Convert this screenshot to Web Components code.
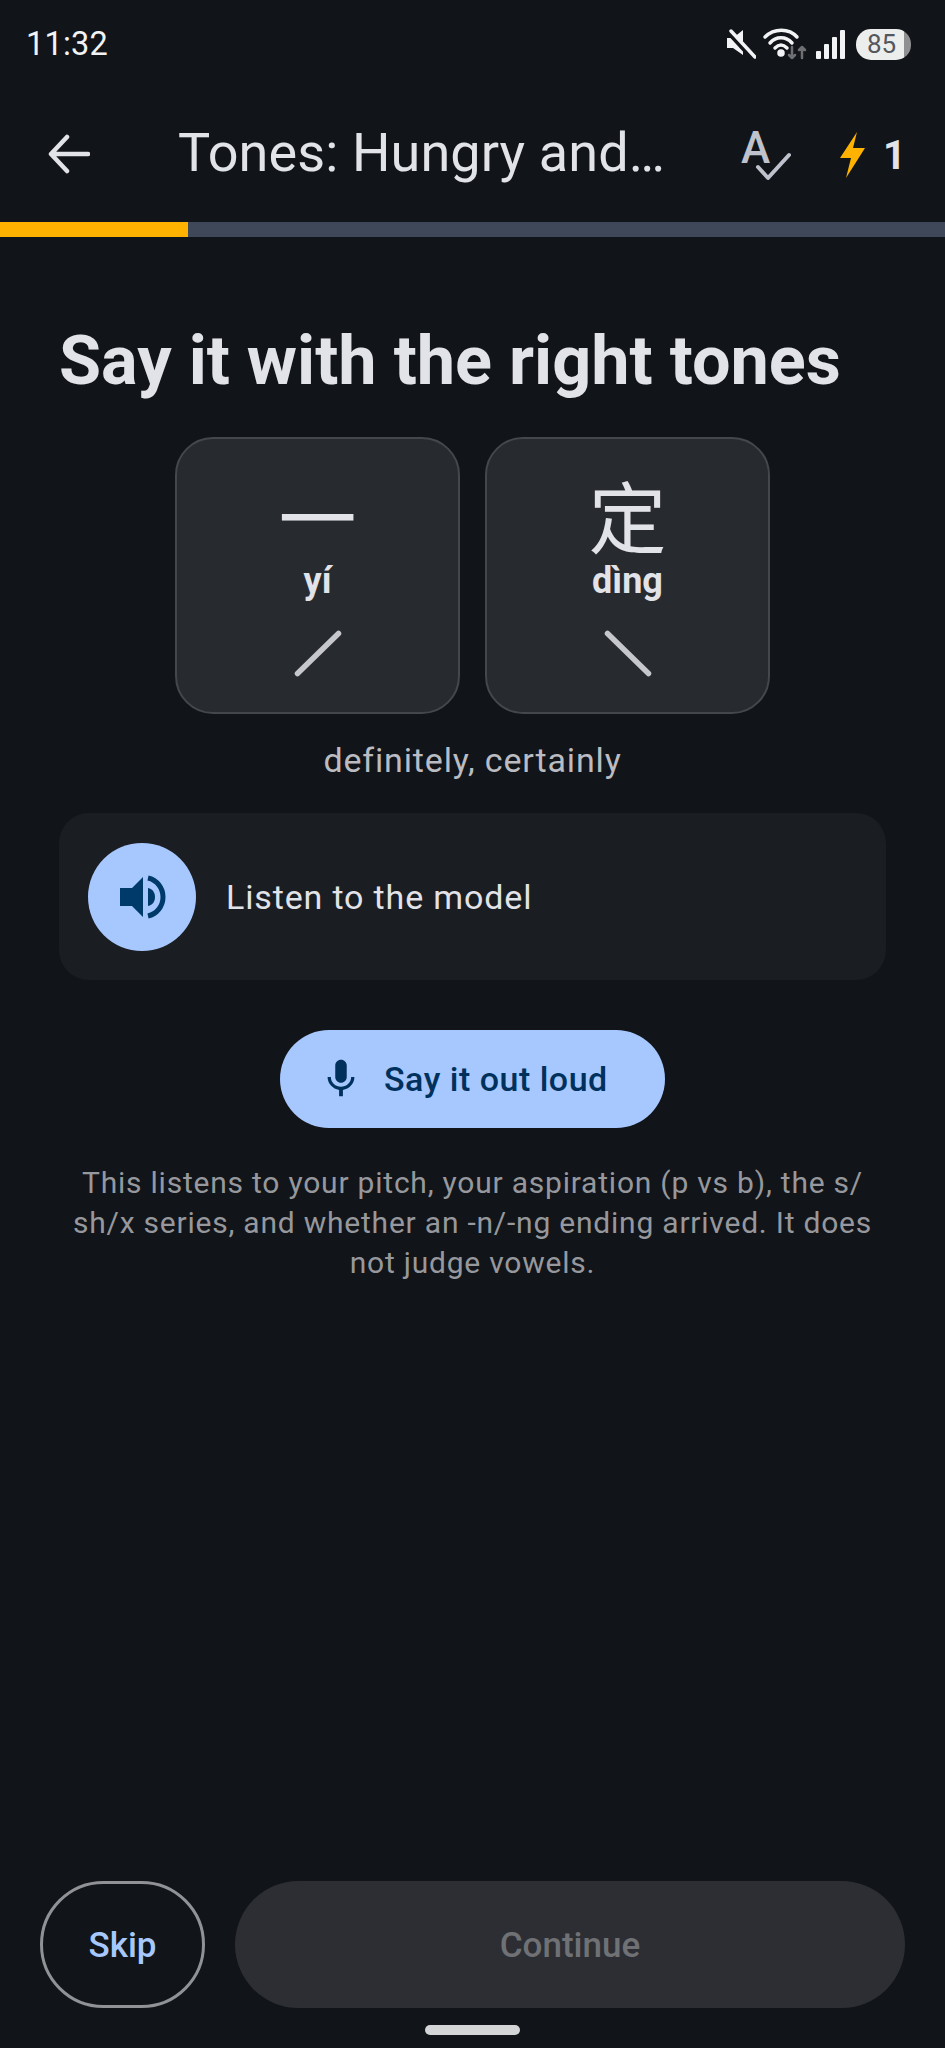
<!DOCTYPE html>
<html lang="en"><head><meta charset="utf-8"><title>Tones</title>
<style>
html,body{margin:0;padding:0;background:#111418}
body{width:945px;height:2048px;overflow:hidden;font-family:Roboto,"Noto Sans CJK SC",sans-serif;color:#e2e3e8}
x-app{height:2048px}
</style></head><body>
<x-app>
 <x-status></x-status>
 <x-appbar title="Tones: Hungry and…"></x-appbar>
 <x-progress></x-progress>
 <x-lesson>
  <x-heading>Say it with the right tones</x-heading>
  <x-cards>
   <x-tone hanzi="一" pinyin="yí" tone="rise"></x-tone>
   <x-tone hanzi="定" pinyin="dìng" tone="fall"></x-tone>
  </x-cards>
  <x-meaning>definitely, certainly</x-meaning>
  <x-listen>Listen to the model</x-listen>
  <x-say>Say it out loud</x-say>
  <x-note>This listens to your pitch, your aspiration (p vs b), the s/<br>sh/x series, and whether an -n/-ng ending arrived. It does<br>not judge vowels.</x-note>
 </x-lesson>
 <x-footer></x-footer>
</x-app>
<script>
function def(name,html,init){
  customElements.define(name,class extends HTMLElement{
    constructor(){super();this.attachShadow({mode:'open'});}
    connectedCallback(){this.shadowRoot.innerHTML=typeof html==='function'?html(this):html;}
  });
}
def('x-app',`<style>:host{display:flex;flex-direction:column;width:945px}</style><slot></slot>`);
def('x-status',`<style>
:host{display:flex;align-items:center;height:88px;padding:0 34px 0 26px;box-sizing:border-box;justify-content:space-between;color:#f2f3f5}
.t{font-size:32.500px;letter-spacing:.2px}
.r{display:flex;align-items:center}
svg{display:block}
.b{width:55px;height:31px;border-radius:15px;background:linear-gradient(90deg,#eceded 0 87%,#8f9092 87%);color:#55575b;font-size:26px;display:flex;align-items:center;justify-content:center;padding-right:4px;box-sizing:border-box;margin-left:10px}
</style><span class="t">11:32</span><div class="r">
<svg width="30" height="30" viewBox="0 0 30 30" fill="#f2f3f5"><path d="M1 9h6l10-8v25L7 19H1z"/><path d="M3 3l23 25" stroke="#111418" stroke-width="6"/><path d="M5 2l24 26" stroke="#f2f3f5" stroke-width="3.500" stroke-linecap="round"/></svg>
<svg width="46" height="34" viewBox="0 0 46 34" style="margin-left:6px" fill="none" stroke="#f2f3f5" stroke-width="3.500" stroke-linecap="round"><path d="M3 10C12 1 27 1 35 10"/><path d="M8 16C14 9 24 9 30 16"/><path d="M13 21C17 17 21 17 25 21"/><circle cx="19" cy="26" r="2" fill="#f2f3f5"/><path d="M30 20v11M30 31l-3-3M40 31V20M40 20l-3 3M40 20l3 3M30 31l3-3" stroke="#6d6f73" stroke-width="2.500"/></svg>
<svg width="30" height="30" viewBox="0 0 30 30" style="margin-left:8px" fill="#f2f3f5"><rect x="0" y="22" width="5" height="8" rx="1"/><rect x="8" y="15" width="5" height="15" rx="1"/><rect x="16" y="8" width="5" height="22" rx="1"/><rect x="24" y="1" width="5" height="29" rx="1"/></svg>
<div class="b">85</div></div>`);
def('x-appbar',h=>`<style>
:host{display:flex;align-items:center;height:134px;position:relative;color:#e2e3e8}
.bk{width:178px;padding-left:48px;box-sizing:border-box;display:flex;margin-top:-2px}
.ti{font-size:54px;white-space:nowrap;flex:1;letter-spacing:.1px;line-height:60px;margin-top:-5px}
.sp{width:52px;height:52px;margin-right:48px;position:relative;flex:none}
.sp span{position:absolute;left:1px;top:-5px;font-size:44px;font-weight:500;line-height:48px;color:#bfc2cc}
.sp svg{position:absolute;left:0;top:0}
.bolt{display:flex;align-items:center;padding-right:39px;font-weight:700;font-size:40px;gap:17px;flex:none}
svg{display:block}
</style>
<div class="bk"><svg width="42" height="40" viewBox="0 0 42 40" fill="none" stroke="#e2e3e8" stroke-width="4.500" stroke-linecap="round" stroke-linejoin="round"><path d="M3 20h37M19 3L3 20l16 17"/></svg></div>
<div class="ti">${h.getAttribute('title')}</div>
<div class="sp"><span>A</span><svg width="52" height="52" viewBox="0 0 52 52" fill="none" stroke="#bfc2cc" stroke-width="4" stroke-linecap="round" stroke-linejoin="round"><path d="M18 38L28 49 49 26"/></svg></div>
<div class="bolt"><svg width="26" height="46" viewBox="0 0 26 46" fill="#ffb300"><path d="M17 0L0 26h11L6 46 25 16H13z"/></svg><span>1</span></div>`);
def('x-progress',`<style>:host{display:block;height:15px;background:#3f4859}i{display:block;width:188px;height:100%;background:#ffb300}</style><i></i>`);
def('x-lesson',`<style>:host{display:flex;flex-direction:column;flex:1;padding:0 59px;box-sizing:border-box;align-items:stretch;min-height:0}</style><slot></slot>`);
def('x-heading',`<style>:host{display:block;font-size:68.400px;font-weight:700;line-height:80px;margin-top:84px;white-space:nowrap;color:#e2e3e8}</style><slot></slot>`);
def('x-cards',`<style>:host{display:flex;justify-content:center;gap:25px;margin-top:36px}</style><slot></slot>`);
def('x-tone',h=>`<style>
:host{display:flex;flex-direction:column;align-items:center;width:285px;height:277px;box-sizing:border-box;background:#272a2f;border:2px solid #44474c;border-radius:38px;padding-top:33px;color:#e2e3e8}
.h{font-family:"Noto Sans CJK SC",sans-serif;font-size:78px;line-height:84px}
.p{font-size:36px;font-weight:700;line-height:40px;margin-top:5px}
svg{display:block;margin-top:27px}
</style><div class="h">${h.getAttribute('hanzi')}</div><div class="p">${h.getAttribute('pinyin')}</div>
<svg width="52" height="50" viewBox="0 0 52 50" fill="none" stroke="#c5c7cc" stroke-width="5.500" stroke-linecap="round"><path d="${h.getAttribute('tone')==='rise'?'M5.500 45.500L46.500 5.500':'M5.500 5.500L46.500 45.500'}"/></svg>`);
def('x-meaning',`<style>:host{display:block;text-align:center;font-size:34px;line-height:44px;color:#babcc2;margin-top:24px;letter-spacing:.85px}</style><slot></slot>`);
def('x-listen',`<style>
:host{display:flex;align-items:center;height:167px;background:#1a1d21;border-radius:30px;margin-top:31px;padding-left:29px;gap:30px;font-size:34px;color:#e2e3e8;letter-spacing:.85px}
.c{width:108px;height:108px;border-radius:50%;background:#a6c8ff;display:flex;align-items:center;justify-content:center}
</style><div class="c"><svg width="48" height="46" viewBox="0 0 48 46" fill="#003a6b"><path d="M2 14h12L25 3v40L14 32H2z"/><path d="M30 14c5 1 7 5 7 9s-2 8-7 9z"/><path d="M30 4c9 2 15 10 15 19s-6 17-15 19" fill="none" stroke="#003a6b" stroke-width="5"/></svg></div><span><slot></slot></span>`);
def('x-say',`<style>
:host{display:flex;align-self:center;align-items:center;height:98px;width:385px;box-sizing:border-box;background:#a6c8ff;border-radius:49px;margin-top:50px;padding-left:38px;gap:20px;color:#00315c;font-size:34px;font-weight:500;letter-spacing:.5px}
svg{display:block}
</style><svg width="46" height="46" viewBox="0 0 24 24" fill="#00315c"><path d="M12 14c1.660 0 2.990-1.340 2.990-3L15 5c0-1.660-1.340-3-3-3S9 3.340 9 5v6c0 1.660 1.340 3 3 3zm5.300-3c0 3-2.540 5.100-5.300 5.100S6.700 14 6.700 11H5c0 3.410 2.720 6.230 6 6.720V21h2v-3.280c3.280-.48 6-3.300 6-6.720h-1.700z"/></svg><span><slot></slot></span>`);
def('x-note',`<style>:host{display:block;text-align:center;font-size:30px;line-height:40px;color:#96989d;margin-top:35px;letter-spacing:.78px;white-space:nowrap}</style><slot></slot>`);
def('x-footer',`<style>
:host{display:flex;flex-direction:column;align-items:center;flex:none}
.r{display:flex;gap:30px;padding:0 40px;width:100%;box-sizing:border-box;align-items:stretch}
.s{width:165px;height:127px;box-sizing:border-box;border:3px solid #909296;border-radius:64px;display:flex;align-items:center;justify-content:center;color:#a6c8ff;font-size:35px;font-weight:500;padding-top:2px}
.c{flex:1;height:127px;border-radius:64px;background:#2c2e33;display:flex;align-items:center;justify-content:center;color:#6f7175;font-size:35px;font-weight:500;padding-top:2px;box-sizing:border-box}
.h{width:95px;height:10px;border-radius:5px;background:#d4d5d6;margin:17px 0 13px}
</style><div class="r"><div class="s">Skip</div><div class="c">Continue</div></div><div class="h"></div>`);
</script>
</body></html>
